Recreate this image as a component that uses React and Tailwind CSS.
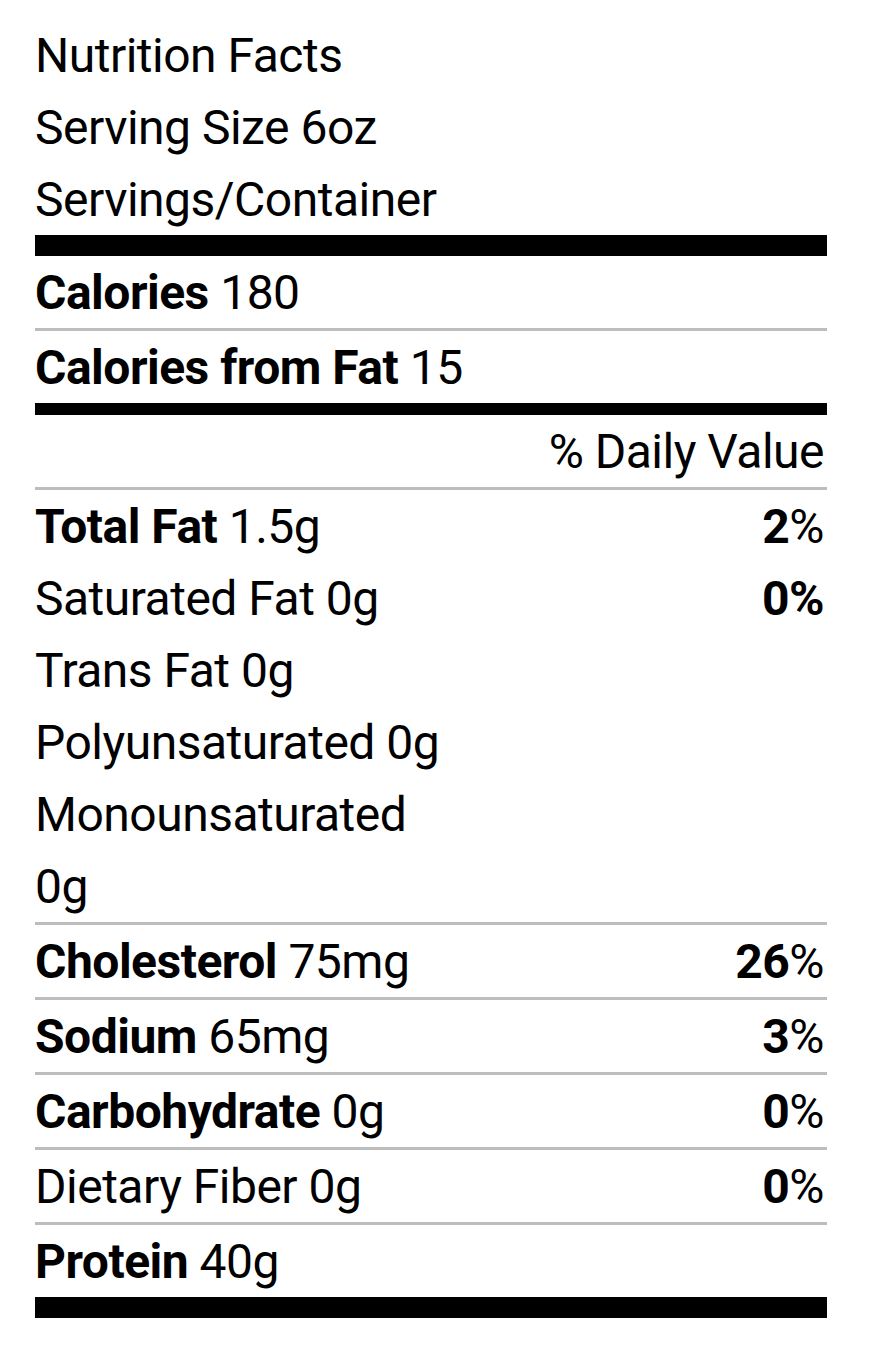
import React from "react";

const Row = ({ children, right, border }) => (
  <div
    className={`flex items-start justify-between h-[72px] leading-[74px] ${
      border ? "border-b-[3px] border-[#bdbdbd] box-content" : ""
    }`}
  >
    <div>{children}</div>
    {right ? <div className="pr-[3px]">{right}</div> : null}
  </div>
);

const Bar = ({ h }) => <div className={`bg-black ${h}`} />;

export default function App() {
  return (
    <div className="bg-white min-h-[1362px] w-[891px] pt-[19px] text-black font-['Roboto',sans-serif] text-[48px] tracking-[-0.5px]">
      <div className="ml-[35px] w-[792px]">
        <Row>Nutrition Facts</Row>
        <Row>Serving Size 6oz</Row>
        <Row>Servings/Container</Row>
        <Bar h="h-[21px]" />
        <Row border>
          <b className="font-bold">Calories</b> 180
        </Row>
        <Row>
          <b className="font-bold">Calories from Fat</b> 15
        </Row>
        <Bar h="h-[12px]" />
        <Row border right="% Daily Value"></Row>
        <Row right={<><b className="font-bold">2</b>%</>}>
          <b className="font-bold">Total Fat</b> 1.5g
        </Row>
        <Row right={<b className="font-bold">0%</b>}>Saturated Fat 0g</Row>
        <Row>Trans Fat 0g</Row>
        <Row>Polyunsaturated 0g</Row>
        <Row>Monounsaturated</Row>
        <Row border>0g</Row>
        <Row border right={<><b className="font-bold">26</b>%</>}>
          <b className="font-bold">Cholesterol</b> 75mg
        </Row>
        <Row border right={<><b className="font-bold">3</b>%</>}>
          <b className="font-bold">Sodium</b> 65mg
        </Row>
        <Row border right={<><b className="font-bold">0</b>%</>}>
          <b className="font-bold">Carbohydrate</b> 0g
        </Row>
        <Row border right={<><b className="font-bold">0</b>%</>}>
          Dietary Fiber 0g
        </Row>
        <Row>
          <b className="font-bold">Protein</b> 40g
        </Row>
        <Bar h="h-[21px]" />
      </div>
    </div>
  );
}
